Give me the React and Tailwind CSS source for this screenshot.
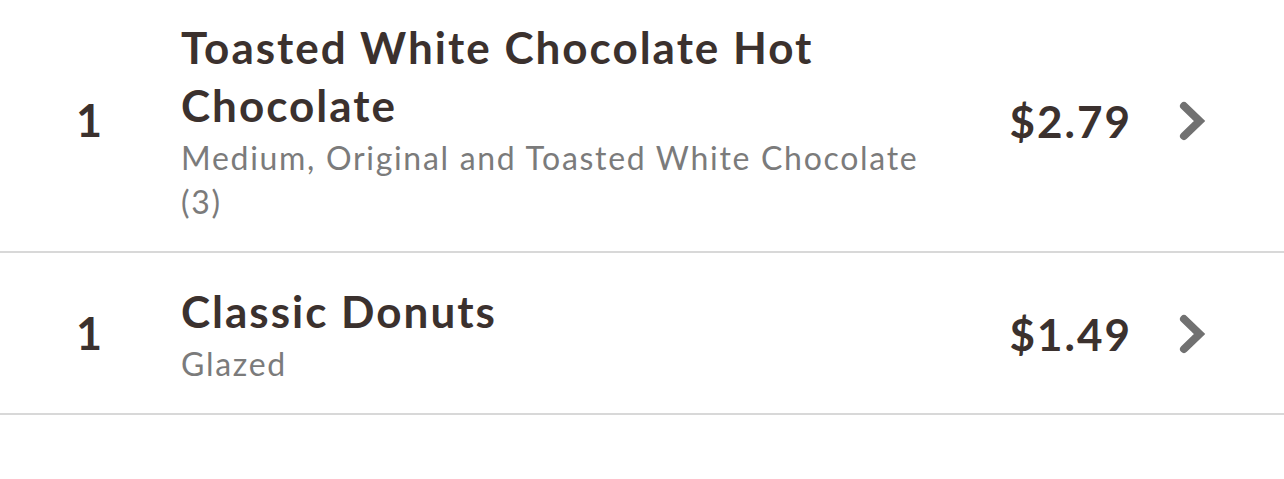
import React from 'react'

const items = [
  {
    qty: 1,
    name: 'Toasted White Chocolate Hot Chocolate',
    detail: 'Medium, Original and Toasted White Chocolate (3)',
    price: '$2.79',
    pad: 'pt-[18px]',
  },
  { qty: 1, name: 'Classic Donuts', detail: 'Glazed', price: '$1.49', pad: 'pt-[29px]' },
]

function Chevron() {
  return (
    <svg width="28" height="42" viewBox="0 0 28 42" className="shrink-0">
      <path
        d="M6 6 L21.5 21 L6 36"
        fill="none"
        stroke="#717171"
        strokeWidth="8"
        strokeLinecap="round"
        strokeLinejoin="miter"
      />
    </svg>
  )
}

function OrderRow({ qty, name, detail, price, pad }) {
  return (
    <div className={`flex items-center border-b-2 border-[#d8d8d8] pb-[27px] ${pad}`}>
      <div className="w-[181px] shrink-0 pl-[76px] text-[45px] font-bold text-[#3b312e]">{qty}</div>
      <div className="min-w-0 flex-1 pr-[50px]">
        <div className="text-[44px] font-bold leading-[58px] tracking-[2px] text-[#3b312e]">{name}</div>
        <div className="mt-[2px] text-[32px] leading-[44px] tracking-[1.7px] text-[#7b7b7b]">{detail}</div>
      </div>
      <div className="flex w-[290px] shrink-0 items-center justify-end pr-[78px]">
        <div className="text-[44px] font-bold tracking-[2px] text-[#3b312e]">{price}</div>
        <div className="ml-[46px]">
          <Chevron />
        </div>
      </div>
    </div>
  )
}

export default function App() {
  return (
    <div className="h-[479px] w-[1284px] bg-white font-['Lato',sans-serif]">
      {items.map((item, i) => (
        <OrderRow key={i} {...item} />
      ))}
    </div>
  )
}
